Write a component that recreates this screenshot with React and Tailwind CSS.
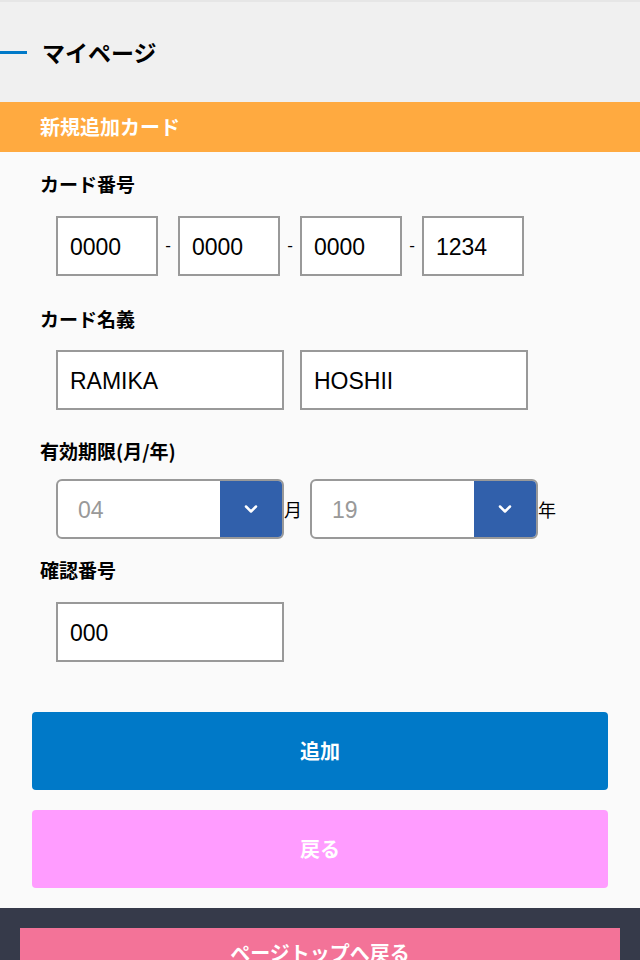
import { ChevronDown } from "lucide-react";

const font = { fontFamily: '"Liberation Sans", "Noto Sans CJK JP", sans-serif' };
const jp = { fontFamily: '"Noto Sans CJK JP", sans-serif' };

const Box = ({ value, className = "" }) => (
  <div
    className={`flex h-[60px] items-center border-2 border-[#999] bg-white px-3 pt-[3px] text-[23px] text-black ${className}`}
  >
    {value}
  </div>
);

const Label = ({ children, className = "" }) => (
  <p className={`text-[19px] font-bold leading-6 text-black ${className}`} style={jp}>
    {children}
  </p>
);

const SelectBox = ({ value, unit }) => (
  <div className="flex items-center">
    <div className="flex h-[60px] w-[228px] overflow-hidden rounded-md border-2 border-[#999] bg-white">
      <div className="flex flex-1 items-center pl-5 pt-[3px] text-[23px] text-[#999]">
        {value}
      </div>
      <div className="flex w-[62px] items-center justify-center bg-[#3160ab]">
        <ChevronDown className="size-5 text-white" strokeWidth={3} />
      </div>
    </div>
    <span className="text-[18px] text-black" style={jp}>{unit}</span>
  </div>
);

export default function App() {
  return (
    <div className="min-h-[960px] bg-[#fafafa]" style={font}>
      <header className="flex h-[102px] items-center border-t-2 border-[#e6e6e6] bg-[#f0f0f0]">
        <span className="h-[3px] w-[27px] bg-[#0079c8]" />
        <h1 className="ml-[15px] text-[23px] font-bold text-black" style={jp}>マイページ</h1>
      </header>
      <div
        className="flex h-[50px] items-center bg-[#ffaa40] pl-10 text-[20px] font-bold text-white"
        style={jp}
      >
        新規追加カード
      </div>

      <main className="px-10 pt-[20px]">
        <Label>カード番号</Label>
        <div className="mt-[20px] flex items-center pl-4">
          <Box value="0000" className="w-[102px]" />
          <span className="w-5 text-center text-[17px]">-</span>
          <Box value="0000" className="w-[102px]" />
          <span className="w-5 text-center text-[17px]">-</span>
          <Box value="0000" className="w-[102px]" />
          <span className="w-5 text-center text-[17px]">-</span>
          <Box value="1234" className="w-[102px]" />
        </div>

        <Label className="mt-[31px]">カード名義</Label>
        <div className="mt-[19px] flex gap-4 pl-4">
          <Box value="RAMIKA" className="w-[228px]" />
          <Box value="HOSHII" className="w-[228px]" />
        </div>

        <Label className="mt-[29px]">有効期限(月/年)</Label>
        <div className="mt-[16px] flex gap-2 pl-4">
          <SelectBox value="04" unit="月" />
          <SelectBox value="19" unit="年" />
        </div>

        <Label className="mt-[19px]">確認番号</Label>
        <div className="mt-[20px] pl-4">
          <Box value="000" className="w-[228px]" />
        </div>
      </main>

      <div className="mt-[50px] flex flex-col gap-5 px-8 pb-5">
        <button
          className="h-[78px] w-full rounded bg-[#0079c8] text-[20px] font-bold text-white"
          style={jp}
        >
          追加
        </button>
        <button
          className="h-[78px] w-full rounded bg-[#ff9cff] text-[20px] font-bold text-white"
          style={jp}
        >
          戻る
        </button>
      </div>

      <footer className="bg-[#363a4a] px-5 pt-5 pb-5">
        <button
          className="h-[50px] w-full bg-[#f37398] text-[20px] font-bold text-white"
          style={jp}
        >
          ページトップへ戻る
        </button>
      </footer>
    </div>
  );
}
